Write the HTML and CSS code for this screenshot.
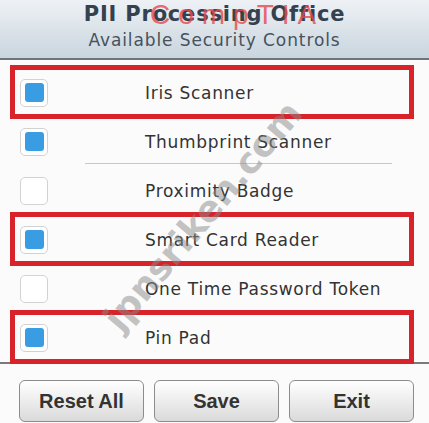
FILE: index.html
```html
<!DOCTYPE html>
<html lang="en">
  <head>
    <title>PII Processing Office</title>
    <link rel="stylesheet" href="styles.css">
  </head>
  <body>
    <div class="panel">
      <div class="header">
        <h1>PII Processing Office</h1>
        <h2>Available Security Controls</h2>
        <span class="brand">CompTIA</span>
      </div>

      <ul class="controls">
        <li class="control marked"><span class="box checked"></span><span class="label">Iris Scanner</span></li>
        <li class="control divider"><span class="box checked"></span><span class="label">Thumbprint Scanner</span></li>
        <li class="control"><span class="box"></span><span class="label">Proximity Badge</span></li>
        <li class="control marked"><span class="box checked"></span><span class="label">Smart Card Reader</span></li>
        <li class="control"><span class="box"></span><span class="label">One Time Password Token</span></li>
        <li class="control marked"><span class="box checked"></span><span class="label">Pin Pad</span></li>
      </ul>

      <div class="actions">
        <button>Reset All</button>
        <button>Save</button>
        <button>Exit</button>
      </div>

      <span class="stamp">jpnsriken.com</span>
    </div>
  </body>
</html>
```

FILE: styles.css
```css
body {
  margin: 0;
  background-color: #fbfbfb;
  font-family: "DejaVu Sans", sans-serif;
}

.panel {
  position: relative;
  width: 429px;
  height: 423px;
  overflow: hidden;
}

.header {
  position: relative;
  height: 58px;
  background: linear-gradient(#eef2f5, #c9d5de);
  border-bottom: 2px solid #6d757c;
  text-align: center;
}

h1 {
  margin: 0;
  padding-top: 2px;
  font-size: 21px;
  line-height: 25px;
  font-weight: bold;
  color: #34414f;
  letter-spacing: 0.8px;
}

h2 {
  margin: 3px 0 0 0;
  font-size: 17px;
  font-weight: normal;
  color: #46525c;
  letter-spacing: 0.9px;
}

.brand {
  position: absolute;
  left: 150px;
  top: 1px;
  font-family: "Liberation Sans", sans-serif;
  font-size: 28px;
  line-height: 28px;
  letter-spacing: 8px;
  color: #e84a4c;
  opacity: 0.8;
}

.controls {
  list-style: none;
  margin: 0;
  padding: 8px 0 0 0;
  height: 294px;
  border-bottom: 2px solid #7a7a7a;
}

.control {
  position: relative;
  display: flex;
  align-items: center;
  height: 49px;
  margin: 0 15px 0 10px;
  padding-left: 10px;
}

.marked::after {
  content: "";
  position: absolute;
  top: -3px;
  bottom: -2px;
  left: 0;
  right: 0;
  border: 5px solid #d8232a;
}

.divider::before {
  content: "";
  position: absolute;
  left: 75px;
  right: 22px;
  bottom: 2px;
  border-top: 1px solid #c8c8c8;
}

.box {
  width: 26px;
  height: 26px;
  border: 1px solid #d2d2d2;
  border-radius: 5px;
  background-color: #fff;
  display: flex;
  align-items: center;
  justify-content: center;
}

.checked::before {
  content: "";
  width: 19px;
  height: 19px;
  border-radius: 3px;
  background-color: #3a9de4;
}

.label {
  margin-left: 97px;
  font-size: 17px;
  color: #333;
  letter-spacing: 0.7px;
}

.actions {
  display: flex;
  gap: 10px;
  padding: 16px 0 0 19px;
}

button {
  width: 125px;
  height: 42px;
  border: 1px solid #8c8c8c;
  border-radius: 6px;
  background: linear-gradient(#ffffff, #dadada);
  font-family: "Liberation Sans", sans-serif;
  font-size: 20px;
  font-weight: bold;
  color: #333;
}

.stamp {
  position: absolute;
  left: 60px;
  top: 195px;
  transform: rotate(-50deg);
  font-size: 36px;
  font-weight: bold;
  color: #8a8a8a;
  opacity: 0.5;
  white-space: nowrap;
}
```
